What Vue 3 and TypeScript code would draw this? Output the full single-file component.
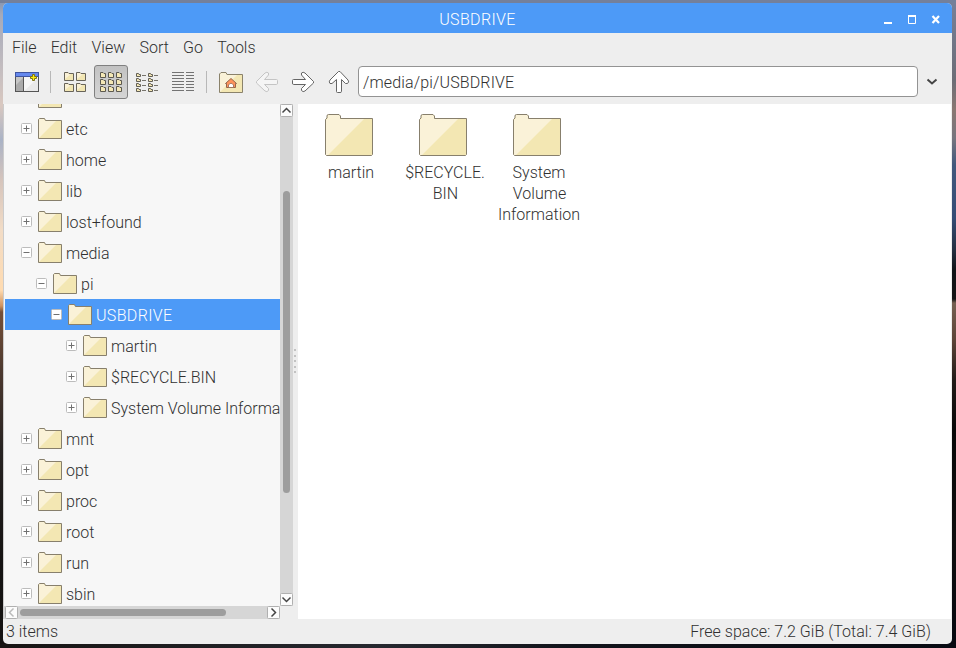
<script setup lang="ts">
interface TreeNode {
  name: string
  depth: number
  open?: boolean
  selected?: boolean
}

const menus: string[] = ['File', 'Edit', 'View', 'Sort', 'Go', 'Tools']

const tree: TreeNode[] = [
  { name: '', depth: 0 },
  { name: 'etc', depth: 0 },
  { name: 'home', depth: 0 },
  { name: 'lib', depth: 0 },
  { name: 'lost+found', depth: 0 },
  { name: 'media', depth: 0, open: true },
  { name: 'pi', depth: 1, open: true },
  { name: 'USBDRIVE', depth: 2, open: true, selected: true },
  { name: 'martin', depth: 3 },
  { name: '$RECYCLE.BIN', depth: 3 },
  { name: 'System Volume Information', depth: 3 },
  { name: 'mnt', depth: 0 },
  { name: 'opt', depth: 0 },
  { name: 'proc', depth: 0 },
  { name: 'root', depth: 0 },
  { name: 'run', depth: 0 },
  { name: 'sbin', depth: 0 },
]

const files: string[][] = [['martin'], ['$RECYCLE.', 'BIN'], ['System', 'Volume', 'Information']]

const two = [0, 1]
const three = [0, 1, 2]
const lines = [0, 1, 2, 3, 4, 5, 6]
</script>

<template>
  <div class="desktop">
    <div class="window">
      <header class="titlebar">
        <span class="title">USBDRIVE</span>
        <svg class="controls" width="60" height="16" viewBox="0 0 60 16" fill="none" stroke="#fff">
          <path d="M4 11H12" stroke-width="2" />
          <path d="M28.500 4V11.500H35.500V4" /><path d="M28 4H36" stroke-width="2" />
          <path d="M52.500 4L59 11M59 4L52.500 11" stroke-width="2.200" />
        </svg>
      </header>

      <nav class="menubar">
        <span v-for="m in menus" :key="m">{{ m }}</span>
      </nav>

      <div class="toolbar">
        <button class="tool">
          <svg width="24" height="24" viewBox="0 0 24 24">
            <rect x=".5" y="2.500" width="23" height="19" fill="#f6f6f6" stroke="#555" />
            <rect x="1" y="7" width="7" height="14" fill="#aaa" />
            <path d="M1 15L8 8V7H1z" fill="#c6c6c6" />
            <path d="M9 21L23 8V21z" fill="#e9e9e9" />
            <path d="M8.500 7V21" stroke="#555" />
            <rect x="0" y="2" width="24" height="5" fill="#3f55a0" />
            <rect x="1" y="3" width="22" height="3" fill="#6488ee" />
            <path d="M17.500 4.500h2v2h2v2h-2v2h-2v-2h-2v-2h2z" fill="#ffee10" stroke="#7d7218" />
          </svg>
        </button>
        <i class="sep"></i>
        <button class="tool">
          <svg width="24" height="24" viewBox="0 0 24 24">
            <template v-for="r in two" :key="r">
              <g v-for="c in two" :key="c" :transform="`translate(${1 + c * 12} ${2 + r * 11})`">
                <path d="M.5 8.500V.5H4L5 1.500H9.500V8.500z" fill="#f2e6b3" stroke="#68645a" />
                <path d="M1 7V1H3.500L4.500 2H7z" fill="#faf1d6" />
              </g>
            </template>
          </svg>
        </button>
        <button class="tool pressed">
          <svg width="24" height="24" viewBox="0 0 24 24">
            <template v-for="r in three" :key="r">
              <g v-for="c in three" :key="c" :transform="`translate(${1 + c * 8} ${2 + r * 7})`">
                <path d="M.5 5.500V.5H3L4 1.500H5.500V5.500z" fill="#f5e8b5" stroke="#5c594f" />
              </g>
            </template>
          </svg>
        </button>
        <button class="tool">
          <svg width="24" height="24" viewBox="0 0 24 24">
            <template v-for="r in [0, 1, 2, 3]" :key="r">
              <g v-for="c in two" :key="c" :transform="`translate(${1 + c * 12} ${3 + r * 5})`">
                <path d="M.5 3.500V.5H2.500L3 1.500H4.500V3.500z" fill="#f5e8b5" stroke="#625f55" />
                <path d="M6 2.500H10" stroke="#77746c" />
              </g>
            </template>
          </svg>
        </button>
        <button class="tool">
          <svg width="24" height="24" viewBox="0 0 24 24" stroke="#737373">
            <path v-for="l in lines" :key="l" :d="`M1 ${2.5 + l * 3}H13M15 ${2.5 + l * 3}H23`" />
          </svg>
        </button>
        <i class="sep"></i>
        <button class="tool">
          <svg width="24" height="24" viewBox="0 0 24 24">
            <path d="M.5 22.500V4L2 2.500H7L8 4.500H23.500V22.500z" fill="#f3e7b3" />
            <path d="M1 22V4L2 3H7L8 5H18z" fill="#faf2d8" />
            <path d="M.5 22.500V4L2 2.500H7L8 4.500H23.500V22.500z" fill="none" stroke="#8a826b" />
            <path d="M7.500 17.500V13.500H6.500L12 8.500L17.500 13.500H16.500V17.500z" fill="#ff935a" stroke="#94664c" />
            <path d="M9.500 17.500V15Q12 11.500 14.500 15V17.500z" fill="#fff" stroke="#94664c" stroke-width=".8" />
          </svg>
        </button>
        <button class="tool">
          <svg width="24" height="24" viewBox="0 0 24 24" fill="#f5f5f5" stroke="#c4c4c4">
            <path d="M1.500 11.500L10 3Q12 1.500 13.500 3V5L9.500 9.500H21.500Q22.500 9.500 22.500 10.500V13Q22.500 14.500 21.500 14.500H9.500L13.500 18.500V20.500Q12 22.500 10 21L1.500 13Z" />
          </svg>
        </button>
        <button class="tool">
          <svg width="24" height="24" viewBox="0 0 24 24" fill="#fff" stroke="#656565">
            <path d="M22.500 11.500L14 3Q12 1.500 10.500 3V5L14.500 9.500H2.500Q1.500 9.500 1.500 10.500V13Q1.500 14.500 2.500 14.500H14.500L10.500 18.500V20.500Q12 22.500 14 21L22.500 13Z" />
          </svg>
        </button>
        <button class="tool">
          <svg width="24" height="24" viewBox="0 0 24 24" fill="#fff" stroke="#656565">
            <path d="M11.500 1.500L3 10Q1.500 12 3 13.500H5L9.500 9.500V21.500Q9.500 22.500 10.500 22.500H13Q14.500 22.500 14.500 21.500V9.500L18.500 13.500H20.500Q22.500 12 21 10L13 1.500Z" />
          </svg>
        </button>
        <div class="path">/media/pi/USBDRIVE</div>
        <svg class="drop" width="12" height="8" viewBox="0 0 12 8" fill="none" stroke="#454545" stroke-width="2">
          <path d="M1.500 1.500L6 5.500L10.500 1.500" />
        </svg>
      </div>

      <div class="body">
        <aside class="side">
          <div class="tree">
            <div
              v-for="n in tree"
              :key="n.name + n.depth"
              class="row"
              :class="[`depth-${n.depth}`, { selected: n.selected }]"
            >
              <svg class="expander" width="11" height="11" viewBox="0 0 11 11">
                <rect x=".5" y=".5" width="10" height="10" rx="1" fill="#fff" stroke="#bcbcbc" />
                <path :d="n.open ? 'M2.500 5.500H8.500' : 'M2.500 5.500H8.500M5.500 2.500V8.500'" stroke="#707070" />
              </svg>
              <svg class="small-folder" width="24" height="21" viewBox="0 0 24 21">
                <path d="M.5 20.500V1.500L1.500 .5H6.500L7.500 2.500H23.500V20.500z" fill="#f3e7b3" />
                <path d="M1 20V2L2 1H6L7 3H18z" fill="#faf2d8" />
                <path d="M.5 20.500V1.500L1.500 .5H6.500L7.500 2.500H23.500V20.500z" fill="none" stroke="#877f6c" />
              </svg>
              <span class="name">{{ n.name }}</span>
            </div>
          </div>
          <div class="vbar">
            <svg class="arrow" width="13" height="13" viewBox="0 0 13 13"><rect x=".5" y=".5" width="12" height="12" rx="1" /><path d="M2.500 8.500L6.500 4.500L10.500 8.500" /></svg>
            <div class="vtrack"><div class="vthumb"></div></div>
            <svg class="arrow" width="13" height="13" viewBox="0 0 13 13"><rect x=".5" y=".5" width="12" height="12" rx="1" /><path d="M2.500 4.500L6.500 8.500L10.500 4.500" /></svg>
          </div>
          <div class="hbar">
            <svg class="arrow off" width="13" height="13" viewBox="0 0 13 13"><rect x=".5" y=".5" width="12" height="12" rx="1" /><path d="M8.500 2.500L4.500 6.500L8.500 10.500" /></svg>
            <div class="htrack"><div class="hthumb"></div></div>
            <svg class="arrow" width="13" height="13" viewBox="0 0 13 13"><rect x=".5" y=".5" width="12" height="12" rx="1" /><path d="M4.500 2.500L8.500 6.500L4.500 10.500" /></svg>
          </div>
        </aside>

        <div class="splitter"><i v-for="d in 5" :key="d"></i></div>

        <main class="files">
          <div v-for="f in files" :key="f[0]" class="file">
            <svg width="48" height="42" viewBox="0 0 48 42">
              <path d="M.5 40.500V5.500L2 4V2Q2 .5 3.500 .5H14L15.500 2V4.500H47.500V40.500L46.500 41.500H1.500z" fill="#f3e7b3" />
              <path d="M1 41V6L2.500 4.500V2L3.500 1H14L15 2.500V5H39L3 41z" fill="#faf2d8" />
              <path d="M.5 40.500V5.500L2 4V2Q2 .5 3.500 .5H14L15.500 2V4.500H47.500V40.500L46.500 41.500H1.500z" fill="none" stroke="#877f6c" />
            </svg>
            <div class="label"><span v-for="l in f" :key="l">{{ l }}</span></div>
          </div>
        </main>
      </div>

      <footer class="status">
        <span>3 items</span>
        <span class="space">Free space: 7.2 GiB (Total: 7.4 GiB)</span>
      </footer>
    </div>
  </div>
</template>

<style>
body {
  margin: 0;
  overflow: hidden;
}
</style>

<style scoped>
* {
  box-sizing: border-box;
}
.desktop {
  width: 956px;
  height: 648px;
  padding: 3px 4px 4px 3px;
  background:
    linear-gradient(#74809b, #74809b) 0 0 / 100% 3px no-repeat,
    linear-gradient(90deg, #171413, #26282f 40%, #11131a 60%, #080a12) 0 100% / 100% 4px no-repeat,
    linear-gradient(#788099 0, #6c6d76 80px, #8a7772 110px, #77757e 138px, #42587c 165px, #354c75 218px, #252f41 250px, #111418 270px, #151415 299px, #776052 303px, #5d4438 340px, #221b18 380px, #080808 430px, #100f0f 540px, #060810 100%) 100% 0 / 8px 100% no-repeat,
    linear-gradient(#8494b1 0, #a5aaba 15px, #c7bfc0 75px, #d9c8c0 105px, #aab3c6 140px, #d5c4bc 180px, #f2dcc6 230px, #ffdbb0 290px, #ce925f 306px, #765038 312px, #4d392f 370px, #272322 450px, #151312 560px, #141211 100%);
  font: 300 16px/21px Roboto, 'Liberation Sans', sans-serif;
  color: #303030;
}
.window {
  width: 949px;
  height: 641px;
  display: flex;
  flex-direction: column;
  background: #eee;
  border-radius: 5px;
  overflow: hidden;
}
.titlebar {
  height: 30px;
  flex: none;
  display: grid;
  grid-template-columns: 1fr auto 1fr;
  align-items: center;
  background: #4d9af7;
  color: #fff;
}
.title {
  grid-column: 2;
  line-height: 32px;
  padding-top: 1px;
  letter-spacing: 0.35px;
}
.controls {
  justify-self: end;
  margin: 1px 12px 0 0;
}
.menubar {
  height: 29px;
  flex: none;
  display: flex;
  gap: 14.2px;
  padding-left: 9px;
  line-height: 29px;
}
.toolbar {
  height: 42px;
  flex: none;
  display: flex;
  align-items: center;
  padding: 0 14px 3px 7px;
  gap: 2px;
}
.tool {
  width: 34px;
  height: 34px;
  flex: none;
  display: grid;
  place-items: center;
  padding: 0;
  border: 1px solid transparent;
  border-radius: 3px;
  background: none;
}
.pressed {
  border-color: #808080;
  background: linear-gradient(#c2c2c2, #d5d5d5);
}
.tool svg {
  display: block;
}
.sep {
  width: 1px;
  height: 22px;
  margin: 0 5px 0 4px;
  flex: none;
  background: #b8b8b8;
}
.path {
  flex: 1;
  height: 31px;
  border: 1px solid #939393;
  border-radius: 4px;
  background: #fff;
  line-height: 31px;
  padding-left: 4px;
  letter-spacing: 0.14px;
}
.drop {
  margin-left: 6px;
}
.body {
  height: 515px;
  flex: none;
  display: flex;
}
.side {
  width: 290px;
  flex: none;
  display: grid;
  grid-template-columns: 276px 13px;
  grid-template-rows: 502px 13px;
  border-left: 1px solid #ccc;
}
.tree {
  overflow: hidden;
  display: flex;
  flex-direction: column;
  background: #f7f7f7;
  padding-left: 1px;
}
.row {
  height: 31px;
  flex: none;
  display: flex;
  align-items: center;
  white-space: nowrap;
}
.row:first-child {
  margin-top: -22px;
}
.depth-0 {
  padding-left: 16px;
}
.depth-1 {
  padding-left: 31px;
}
.depth-2 {
  padding-left: 46px;
}
.depth-3 {
  padding-left: 61px;
}
.selected {
  background: #4d9af7;
  color: #fff;
  letter-spacing: 0.35px;
}
.expander {
  flex: none;
}
.small-folder {
  flex: none;
  margin: 0 4px 0 6px;
}
.name {
  line-height: 31px;
  padding-top: 1px;
}
.vbar {
  display: flex;
  flex-direction: column;
  background: #d6d6d6;
}
.vtrack {
  flex: 1;
  padding: 74px 3px 0;
}
.vthumb {
  height: 302px;
  border-radius: 4px;
  background: #9d9d9d;
}
.hbar {
  display: flex;
  background: #d6d6d6;
  padding-left: 1px;
}
.htrack {
  flex: 1;
  padding: 3px 0 0 2px;
}
.hthumb {
  width: 206px;
  height: 7px;
  border-radius: 4px;
  background: #9d9d9d;
}
.arrow {
  flex: none;
  display: block;
  fill: none;
  stroke: #444;
  stroke-width: 1.5;
}
.arrow rect {
  fill: #fcfcfc;
  stroke: #b0b0b0;
  stroke-width: 1;
}
.off {
  stroke: #bbb;
}
.splitter {
  width: 5px;
  flex: none;
  display: flex;
  flex-direction: column;
  justify-content: center;
  gap: 3.5px;
  padding: 0 0 1px 1px;
}
.splitter i {
  width: 2px;
  height: 2px;
  background: #c2c2c2;
}
.files {
  flex: 1;
  margin-right: 1px;
  background: #fff;
  display: flex;
  padding: 10px 0 0 4px;
}
.file {
  width: 94px;
  flex: none;
  display: flex;
  flex-direction: column;
  align-items: center;
}
.file svg {
  display: block;
}
.label {
  display: flex;
  flex-direction: column;
  align-items: center;
  margin: 6px 0 0 4px;
}
.label span:nth-child(2) {
  margin-left: 1px;
}
.status {
  height: 25px;
  display: flex;
  justify-content: space-between;
  line-height: 25px;
  padding: 0 21px 0 3px;
}
.space {
  letter-spacing: 0.02px;
}
</style>
